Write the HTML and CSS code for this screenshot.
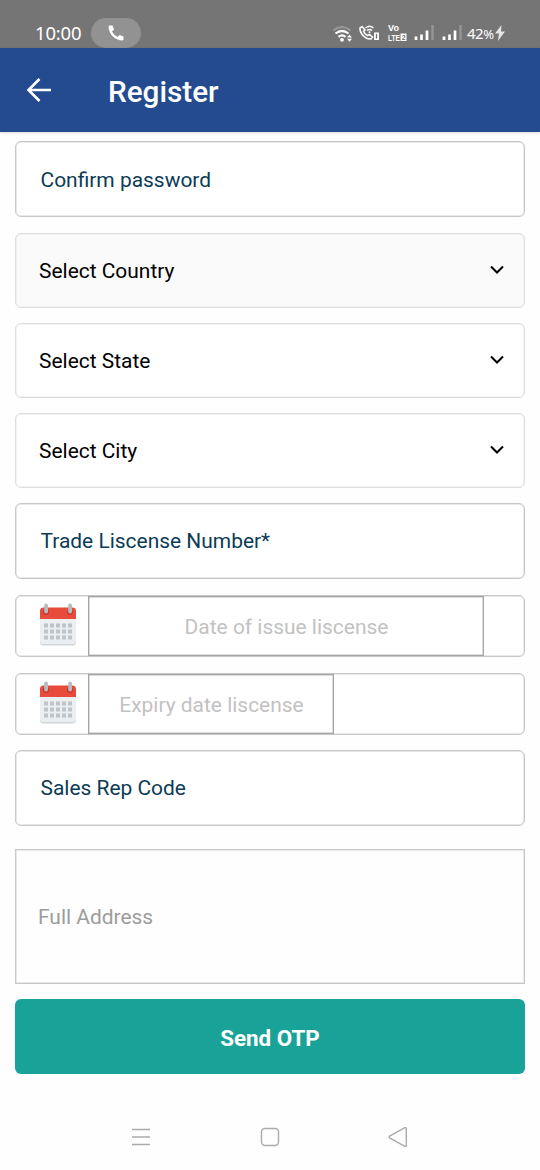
FILE: index.html
```html
<!DOCTYPE html>
<html lang="en">
<head>
<meta charset="utf-8">
<title>Register</title>
<link rel="stylesheet" href="styles.css">
</head>
<body>
<svg class="defs" width="0" height="0" aria-hidden="true">
  <symbol id="chevron" viewBox="0 0 16 12"><path d="M2 2.500l6 6 6-6" fill="none" stroke="#000" stroke-width="2"/></symbol>
  <symbol id="calendar" viewBox="0 0 38 44">
    <path d="M1 17h36v22a3.500 3.500 0 0 1-3.500 3.500h-29A3.500 3.500 0 0 1 1 39z" fill="#d0d5d9"/>
    <path d="M1 15h36v22.500a3.500 3.500 0 0 1-3.500 3.500h-29A3.500 3.500 0 0 1 1 37.500z" fill="#eceff1"/>
    <path d="M1 16V8a3.500 3.500 0 0 1 3.500-3.500h29A3.500 3.500 0 0 1 37 8v8z" fill="#e84b3c"/>
    <circle cx="7" cy="9" r="3" fill="#c23a30"/><circle cx="31" cy="9" r="3" fill="#c23a30"/>
    <rect x="5.200" y="0.500" width="3.800" height="10" rx="1.900" fill="#b5bbbf"/>
    <rect x="29.200" y="0.500" width="3.800" height="10" rx="1.900" fill="#b5bbbf"/>
    <path d="M5 22.500h28M5 28.500h28M5 34.500h28" stroke="#bfc4c8" stroke-width="4" stroke-dasharray="4 2"/>
  </symbol>
  <symbol id="signal" viewBox="0 0 20 16">
    <path d="M2 15v-3.500M7.500 15V9.500M13 15V5.500" stroke="#fff" stroke-width="2.700"/>
    <path d="M18.500 15V0" stroke="#959595" stroke-width="2.500"/>
  </symbol>
</svg>

<div class="statusbar">
  <span class="clock">10:00</span>
  <span class="call-pill">
    <svg width="18" height="18" viewBox="0 0 18 18"><path d="M1.500 2.500C1.500 10 8 16.500 15.500 16.500l1-1v-3l-4-1.500-2 2C8 11.500 6.500 10 5 7.500l2-2L5.500 1.500h-3z" fill="#fff"/></svg>
  </span>
  <div class="indicators">
    <svg class="wifi" width="20" height="16" viewBox="0 0 20 16" fill="none">
      <path d="M0.500 4.500Q9 -2.500 17.500 4.500" stroke="#999" stroke-width="2"/>
      <path d="M2.500 7.500q6.500-5 13 0M5.500 10.800q3.500-3 7 0" stroke="#fff" stroke-width="2.200"/>
      <circle cx="9" cy="13.800" r="1.900" fill="#fff"/>
      <path d="M14 11.500l2.500-3 2.500 3zM14 12.800l2.500 3 2.500-3z" fill="#fff"/>
    </svg>
    <svg class="wificall" width="20" height="16" viewBox="0 0 20 16" fill="none" stroke="#fff">
      <path d="M3 1.500L1 3C.5 8.500 6.500 14.500 12 14l1.500-2-3-2.500-1.800 1.200Q5.500 9 4.500 6.500L6 5z" stroke-width="1.500"/>
      <path d="M6.500 3q4-3.500 8 0M8 5.500q2.500-2 5 0" stroke-width="1.500"/>
      <circle cx="10.500" cy="7.300" r="1" fill="#fff" stroke="none"/>
      <rect x="15" y="7.500" width="5" height="7.500" fill="#fff" stroke="none"/>
      <path d="M17.500 9v4.500" stroke="#757575" stroke-width="1.300"/>
    </svg>
    <svg class="volte" width="19" height="18" viewBox="0 0 19 18">
      <text class="tiny" x="0" y="7" textLength="11" lengthAdjust="spacingAndGlyphs">Vo</text>
      <text class="tiny" x="0" y="16.500" textLength="12" lengthAdjust="spacingAndGlyphs">LTE</text>
      <rect x="12.500" y="9.500" width="6" height="7.500" fill="#fff"/>
      <text class="tiny sim" x="13.700" y="15.700">2</text>
    </svg>
    <svg class="signal-a" width="20" height="16"><use href="#signal"/></svg>
    <svg class="signal-b" width="20" height="16"><use href="#signal"/></svg>
    <span class="battery">42<small>%</small></span>
    <svg class="bolt" width="10" height="16" viewBox="0 0 10 16"><path d="M6.500 0L0 8.500h4L3 16l7-9.500H6z" fill="#e5e5e5"/></svg>
  </div>
</div>

<header class="appbar">
  <svg width="26" height="26" viewBox="0 0 26 26" fill="none" stroke="#fff" stroke-width="2.600"><path d="M25 13H3M13.500 2L2.500 13l11 11"/></svg>
  <h1>Register</h1>
</header>

<main class="form">
  <div class="field confirm"><span>Confirm password</span></div>
  <div class="field select disabled"><span>Select Country</span><svg width="16" height="12"><use href="#chevron"/></svg></div>
  <div class="field select"><span>Select State</span><svg width="16" height="12"><use href="#chevron"/></svg></div>
  <div class="field select"><span>Select City</span><svg width="16" height="12"><use href="#chevron"/></svg></div>
  <div class="field"><span>Trade Liscense Number*</span></div>
  <div class="date"><svg width="38" height="44"><use href="#calendar"/></svg><div class="datebox issue"><span>Date of issue liscense</span></div></div>
  <div class="date last"><svg width="38" height="44"><use href="#calendar"/></svg><div class="datebox expiry"><span>Expiry date liscense</span></div></div>
  <div class="field sales"><span>Sales Rep Code</span></div>
  <div class="address"><span>Full Address</span></div>
  <button class="submit"><span>Send OTP</span></button>
</main>

<nav class="navbar">
  <svg width="20" height="20" viewBox="0 0 20 20"><path d="M1 2.500h18M1 10h18M1 17.500h18" stroke="#aaa" stroke-width="1.300"/></svg>
  <svg width="20" height="20" viewBox="0 0 20 20"><rect x="1.500" y="1.500" width="17" height="17" rx="3.500" fill="none" stroke="#aaa" stroke-width="1.400"/></svg>
  <svg width="20" height="20" viewBox="0 0 20 20"><path d="M2 8.800L16.500 .8q1.800-.8 1.800 1v16.400q0 1.800-1.800 1L2 11.200q-1.800-1.200 0-2.400z" fill="none" stroke="#aaa" stroke-width="1.400"/></svg>
</nav>
</body>
</html>
```

FILE: styles.css
```css
* { box-sizing: border-box; }
body {
  margin: 0;
  width: 540px;
  height: 1170px;
  overflow: hidden;
  background: #fefefe;
  font-family: Roboto, sans-serif;
  display: flex;
  flex-direction: column;
}
svg { display: block; flex: none; }
.defs { position: absolute; }

.statusbar {
  height: 48px;
  flex: none;
  background: #757575;
  color: #fff;
  display: flex;
  align-items: flex-start;
  padding: 18px 35px 0 35px;
}
.clock { font: 18.500px/30px "Noto Sans", sans-serif; width: 56px; letter-spacing: -0.2px; }
.call-pill {
  width: 50px;
  height: 30px;
  border-radius: 15px;
  background: #929292;
  display: flex;
  align-items: center;
  justify-content: center;
}
.indicators { margin-left: auto; display: flex; align-items: center; height: 30px; }
.wifi { margin: 2px 6px 0 0; }
.wificall { margin-right: 9px; }
.volte { margin-right: 7px; }
.signal-a { margin-right: 8px; }
.signal-b { margin-right: 5px; }
.battery { font: 15px/30px "Noto Sans", sans-serif; width: 28px; white-space: nowrap; letter-spacing: -0.5px; }
.battery small { font-size: 13px; }
.tiny { font: bold 8.500px "Liberation Sans", sans-serif; fill: #fff; }
.sim { font-size: 7px; fill: #757575; }

.appbar {
  height: 84px;
  flex: none;
  background: #244b90;
  color: #fff;
  display: flex;
  align-items: center;
  padding: 0 26px;
  gap: 56px;
  box-shadow: 0 1px 3px rgba(0, 0, 0, .15);
}
.appbar h1 { margin: 3px 0 0; font-size: 29.700px; font-weight: 500; line-height: 40px; }

.form { padding: 9px 15px 0; display: flex; flex-direction: column; font-size: 20.950px; }
.field, .date {
  border: 1px solid #c8c8c8;
  border-radius: 6px;
  background: #fff;
  box-shadow: inset 0 0 0 .5px #d4d4d4;
  display: flex;
  align-items: center;
  margin-bottom: 16px;
}
.field { height: 76px; padding: 0 19px 0 24.500px; color: #0b3b56; }
.confirm span { padding-top: 1px; }
.select {
  height: 75px;
  margin-bottom: 15px;
  padding-left: 23px;
  border-color: #dedede;
  box-shadow: inset 0 0 0 .5px #e8e8e8;
  color: #000;
  justify-content: space-between;
}
.disabled { background: #fafafa; }
.select svg { margin-bottom: 1px; }
.date { height: 62px; padding-left: 23px; }
.date svg { margin-bottom: 3px; }
.last { margin-bottom: 15px; }
.datebox {
  height: 60px;
  margin-left: 11px;
  border: 1px solid #a4a4a4;
  box-shadow: inset 0 0 0 .5px #bbb;
  display: flex;
  align-items: center;
  justify-content: center;
  color: #c2c2c2;
}
.datebox span { padding: 2px 0 0 1px; }
.issue { width: 396px; }
.expiry { width: 246px; }
.sales { margin-bottom: 23px; }
.address {
  height: 135px;
  border: 1px solid #c8c8c8;
  box-shadow: inset 0 0 0 .5px #d4d4d4;
  padding-left: 22px;
  display: flex;
  align-items: center;
  color: #9c9c9c;
  margin-bottom: 15px;
}
.submit {
  height: 75px;
  border: 0;
  border-radius: 6px;
  background: #19a398;
  color: #fff;
  font: 700 22.400px Roboto, sans-serif;
  padding: 2px 0 0;
}
.navbar { margin-top: auto; padding: 0 132px 23px 131px; display: flex; justify-content: space-between; }
```
